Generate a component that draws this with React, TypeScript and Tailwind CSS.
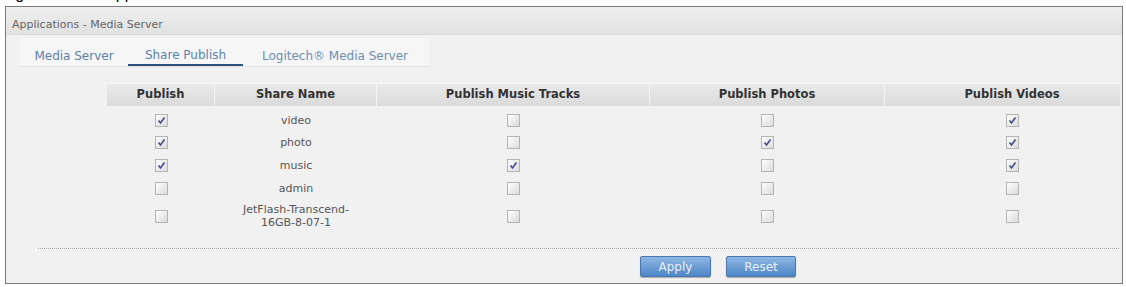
import React from 'react'

const rows = [
  { name: 'video', pub: true, music: false, photo: false, vid: true },
  { name: 'photo', pub: true, music: false, photo: true, vid: true },
  { name: 'music', pub: true, music: true, photo: false, vid: true },
  { name: 'admin', pub: false, music: false, photo: false, vid: false },
  { name: 'JetFlash-Transcend-16GB-8-07-1', pub: false, music: false, photo: false, vid: false },
]

function Box({ on }: { on: boolean }) {
  return (
    <span className="inline-flex w-[13px] h-[13px] border border-[#b4b4b4] bg-gradient-to-br from-[#fdfdfd] to-[#dcdcdc] items-center justify-center">
      {on && (
        <svg width="9" height="9" viewBox="0 0 9 9">
          <path d="M1.5 4.5 L3.5 7 L7.5 1.5" stroke="#45498a" strokeWidth="1.6" fill="none" />
        </svg>
      )}
    </span>
  )
}

export default function App() {
  const font = { fontFamily: '"DejaVu Sans", Verdana, sans-serif' }
  return (
    <div className="w-[1126px] h-[287px] bg-white overflow-hidden" style={font}>
      <div className="h-[6px] overflow-hidden">
        <div className="-mt-[14px] pl-[2px] text-[16px] leading-[16px] text-black whitespace-nowrap" style={{ fontFamily: '"Liberation Sans", Arial, sans-serif' }}>
          Figure 235&nbsp;&nbsp;&nbsp;&nbsp;&nbsp;&nbsp;Applications &gt; Media Server &gt; Share Publish
        </div>
      </div>
      <div className="ml-[5px] w-[1118px] h-[278px] border border-[#7a7a7a] bg-[#f1f1f1]">
        <div className="h-[28px] flex items-center pt-[9px] pl-[6px] bg-gradient-to-b from-[#efefef] to-[#e2e2e2] border-b border-[#dadada] text-[11px] text-[#666]">
          Applications - Media Server
        </div>
        <div className="mt-[3px] ml-[14px] w-[409px] h-[29px] flex bg-[#f6f6f6] border-b border-[#e0e0e0] text-[12px] text-[#5a82ad]">
          <div className="w-[108px] flex items-end justify-center pb-[1px]">Media Server</div>
          <div className="w-[115px] flex items-end justify-center border-b-2 border-[#2f4f7c]">Share Publish</div>
          <div className="w-[184px] flex items-end justify-center pb-[1px] text-[#6f8fb3]">Logitech® Media Server</div>
        </div>
        <div className="mt-[16px] ml-[101px] w-[1013px]">
          <div className="h-[23px] flex bg-gradient-to-b from-[#eaeaea] to-[#dadada] border-t border-[#f7f7f7] text-[11.5px] font-bold text-[#333]">
            <div className="w-[108px] flex items-center justify-center border-r border-[#f4f4f4]">Publish</div>
            <div className="w-[162px] flex items-center justify-center border-r border-[#f4f4f4]">Share Name</div>
            <div className="w-[273px] flex items-center justify-center border-r border-[#f4f4f4]">Publish Music Tracks</div>
            <div className="w-[235px] flex items-center justify-center border-r border-[#f4f4f4]">Publish Photos</div>
            <div className="w-[235px] flex items-center justify-center pl-[19px]">Publish Videos</div>
          </div>
          <div className="pt-[3px] text-[11px] text-[#555]">
            {rows.map((r, i) => (
              <div key={i} className={`flex ${i == 4 ? 'h-[32px]' : i == 0 ? 'h-[22px]' : 'h-[23px]'}`}>
                <div className="w-[108px] flex items-center justify-center"><Box on={r.pub} /></div>
                <div className="w-[162px] flex items-center justify-center text-center leading-[13px]">
                  {i == 4 ? (<span>JetFlash-Transcend-<br />16GB-8-07-1</span>) : r.name}
                </div>
                <div className="w-[273px] flex items-center justify-center"><Box on={r.music} /></div>
                <div className="w-[235px] flex items-center justify-center"><Box on={r.photo} /></div>
                <div className="w-[235px] flex items-center justify-center pl-[19px]"><Box on={r.vid} /></div>
              </div>
            ))}
          </div>
        </div>
        <div className="mt-[16px] ml-[32px] mr-[3px] border-t border-dotted border-[#a9a9a9]"></div>
        <div className="mt-[7px] ml-[634px] flex gap-[15px] text-[12px] text-[#e8f0fa]">
          <button className="w-[71px] h-[21px] rounded-[2px] border border-[#4778b0] bg-gradient-to-b from-[#8db6e2] to-[#4f87c6] shadow-[0_1px_1px_rgba(0,0,0,0.3)]">Apply</button>
          <button className="w-[70px] h-[21px] rounded-[2px] border border-[#4778b0] bg-gradient-to-b from-[#8db6e2] to-[#4f87c6] shadow-[0_1px_1px_rgba(0,0,0,0.3)]">Reset</button>
        </div>
      </div>
    </div>
  )
}
